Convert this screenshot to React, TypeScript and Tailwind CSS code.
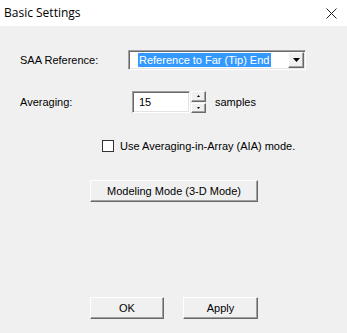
import React from "react";

const sunken =
  "border border-t-[#a0a0a0] border-l-[#a0a0a0] border-b-white border-r-white shadow-[inset_1px_1px_0_#696969,inset_-1px_-1px_0_#e3e3e3] bg-white";
const raised =
  "border border-t-white border-l-white border-b-[#696969] border-r-[#696969] shadow-[inset_-1px_-1px_0_#a0a0a0] bg-[#f0f0f0]";

function Button({ label, w }: { label: string; w: string }) {
  return (
    <button className={`${raised} ${w} h-[22px] flex items-center justify-center text-[11px] text-black`}>
      {label}
    </button>
  );
}

export default function App() {
  return (
    <div
      className="w-[347px] h-[333px] bg-[#f0f0f0] flex flex-col text-black"
      style={{ fontFamily: '"Liberation Sans", Arial, sans-serif' }}
    >
      <div className="h-[26px] bg-white flex items-center justify-between pl-[4px] pr-[10px]">
        <span className="text-[12px] font-['Open_Sans',sans-serif]">Basic Settings</span>
        <svg width="11" height="11" viewBox="0 0 11 11">
          <path d="M0.5 0.5 L10.5 10.5 M10.5 0.5 L0.5 10.5" stroke="#222" strokeWidth="1" />
        </svg>
      </div>

      <div className="flex-1 flex flex-col pl-[20px] text-[11px]">
        <div className="mt-[24px] h-[20px] flex items-center">
          <span className="w-[108px]">SAA Reference:</span>
          <div className={`${sunken} w-[178px] h-[20px] flex items-center pl-[9px] pr-[1px]`}>
            <span className="bg-[#3399ff] text-white h-[14px] leading-[14px] pr-[2px] pl-[1px]">
              Reference to Far (Tip) End
            </span>
            <div className="flex-1" />
            <div className={`${raised} w-[16px] h-[16px] flex items-center justify-center`}>
              <svg width="7" height="4" viewBox="0 0 7 4">
                <path d="M0 0 L7 0 L3.5 4 Z" fill="#000" />
              </svg>
            </div>
          </div>
        </div>

        <div className="mt-[21px] h-[22px] flex items-center">
          <span className="w-[112px]">Averaging:</span>
          <div className={`${sunken} w-[58px] h-[22px] flex items-center pl-[6px]`}>15</div>
          <div className="ml-[1px] w-[15px] h-[22px] flex flex-col gap-[1px]">
            <div className={`${raised} flex-1 flex items-center justify-center`}>
              <svg width="3" height="2" viewBox="0 0 3 2"><path d="M1.5 0 L3 2 L0 2 Z" fill="#000" /></svg>
            </div>
            <div className={`${raised} flex-1 flex items-center justify-center`}>
              <svg width="3" height="2" viewBox="0 0 3 2"><path d="M0 0 L3 0 L1.5 2 Z" fill="#000" /></svg>
            </div>
          </div>
          <span className="ml-[9px]">samples</span>
        </div>

        <div className="mt-[27px] h-[12px] flex items-center pl-[82px]">
          <div className="w-[12px] h-[12px] bg-white border border-[#333]" />
          <span className="ml-[6px]">Use Averaging-in-Array (AIA) mode.</span>
        </div>

        <div className="mt-[28px] pl-[70px]">
          <Button label="Modeling Mode (3-D Mode)" w="w-[168px]" />
        </div>

        <div className="flex-1" />

        <div className="mb-[14px] pl-[70px] flex gap-[19px]">
          <Button label="OK" w="w-[74px]" />
          <Button label="Apply" w="w-[75px]" />
        </div>
      </div>
    </div>
  );
}
